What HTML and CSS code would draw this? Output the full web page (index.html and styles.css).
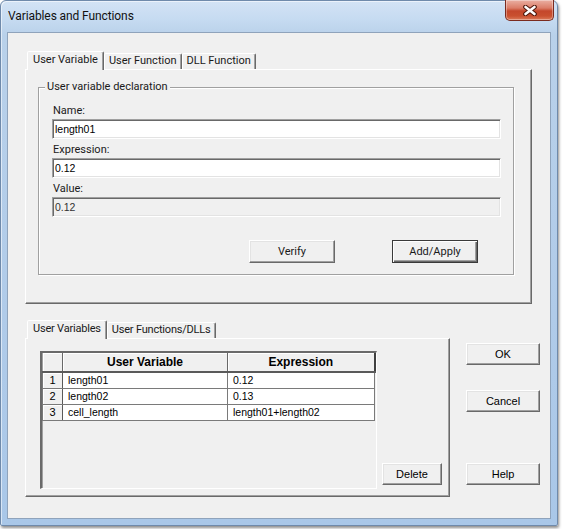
FILE: index.html
```html
<!DOCTYPE html>
<html>
<head>
<meta charset="utf-8">
<title>Variables and Functions</title>
<link rel="stylesheet" href="styles.css">
</head>
<body>
<div class="window">
  <div class="titlebar">
    <span class="title">Variables and Functions</span>
    <div class="close">
      <svg width="14" height="11" viewBox="0 0 14 11">
        <path d="M2.5 2 L11.5 9 M11.5 2 L2.5 9" stroke="#4a1408" stroke-width="4.6" stroke-linecap="round"/>
        <path d="M2.5 2 L11.5 9 M11.5 2 L2.5 9" stroke="#ffffff" stroke-width="2.6" stroke-linecap="round"/>
      </svg>
    </div>
  </div>
  <div class="client">
    <div class="tabctl">
      <div class="tabstrip">
        <div class="tab active">User Variable</div>
        <div class="tab">User Function</div>
        <div class="tab">DLL Function</div>
      </div>
      <div class="tabpage page1">
        <fieldset class="group">
          <legend>User variable declaration</legend>
          <div class="label">Name:</div>
          <div class="field">length01</div>
          <div class="label sp">Expression:</div>
          <div class="field">0.12</div>
          <div class="label sp">Value:</div>
          <div class="field disabled">0.12</div>
          <div class="group-buttons">
            <div class="btn">Verify</div>
            <div class="btn default">Add/Apply</div>
          </div>
        </fieldset>
      </div>
    </div>
    <div class="lower">
      <div class="tabctl tabctl2">
        <div class="tabstrip">
          <div class="tab active">User Variables</div>
          <div class="tab">User Functions/DLLs</div>
        </div>
        <div class="tabpage page2">
          <div class="grid">
            <table>
              <colgroup><col class="c0"><col class="c1"><col class="c2"></colgroup>
              <thead>
                <tr><th class="corner"></th><th>User Variable</th><th class="last">Expression</th></tr>
              </thead>
              <tbody>
                <tr><td class="num">1</td><td>length01</td><td>0.12</td></tr>
                <tr><td class="num">2</td><td>length02</td><td>0.13</td></tr>
                <tr><td class="num">3</td><td>cell_length</td><td>length01+length02</td></tr>
              </tbody>
            </table>
          </div>
          <div class="btn sbtn delete">Delete</div>
        </div>
      </div>
      <div class="side">
        <div class="btn sbtn ok">OK</div>
        <div class="btn sbtn cancel">Cancel</div>
        <div class="btn sbtn help">Help</div>
      </div>
    </div>
  </div>
</div>
</body>
</html>
```
FILE: styles.css
```css
* { box-sizing: border-box; }
html, body { margin: 0; padding: 0; background: #ffffff; }
body {
  width: 563px; height: 529px; overflow: hidden;
  font-family: Roboto, "Liberation Sans", sans-serif;
  font-size: 11px; color: #1a1a1a;
}

.window {
  position: relative;
  width: 558px; height: 526px;
  border: 1px solid #6f8aab;
  border-radius: 6px 6px 2px 2px;
  background: linear-gradient(180deg, #d3e3f5 0px, #c6dbf1 18px, #b9d1ea 34px, #b0cbe9 60%, #a9c7e8 100%);
  box-shadow: 1px 2px 3px rgba(0,0,0,.45), inset 1px 1px 0 rgba(255,255,255,.55);
  display: flex; flex-direction: column;
}
.titlebar {
  height: 31px; flex: none;
  display: flex; align-items: center;
  padding: 0 0 1px 7px;
}
.title { font-size: 12px; color: #111; letter-spacing: -0.1px; }
.close {
  position: absolute; top: -1px; right: 3px;
  width: 49px; height: 21px;
  border: 1px solid #7a2b1f; border-top: none;
  border-radius: 0 0 5px 5px;
  background: linear-gradient(180deg, #eab0a3 0%, #db7d68 40%, #c4472b 55%, #c9502f 80%, #db7b5a 100%);
  box-shadow: inset 0 0 0 1px rgba(255,255,255,.35);
  display: flex; align-items: center; justify-content: center;
}

.client {
  flex: 1;
  margin: 0 6px 6px 6px;
  background: #f0f0f0;
  border: 1px solid #8fa3bb;
  padding: 18px 0 0 17px;
}

.tabstrip {
  display: flex; align-items: flex-end;
  height: 18px; margin-left: 2px;
}
.tab {
  height: 16px;
  padding: 0 4px;
  line-height: 14px;
  background: #f0f0f0;
  border: 1px solid; border-bottom: none;
  border-color: #ffffff #696969 transparent #ffffff;
  border-radius: 2px 2px 0 0;
  box-shadow: inset -1px 0 0 #a0a0a0;
  white-space: nowrap;
}
.tab.active {
  position: relative; z-index: 1;
  height: 19px; margin-bottom: -1px;
  padding: 1px 5px 0 5px;
}
.tabctl2 .tab { letter-spacing: -0.2px; }

.tabpage {
  border: 1px solid;
  border-color: #ffffff #696969 #696969 #ffffff;
  box-shadow: inset -1px -1px 0 #a0a0a0;
  background: #f0f0f0;
}
.page1 {
  width: 507px; height: 235px;
  padding: 10px 0 0 12px;
}

.group {
  margin: 0; width: 476px;
  padding: 10px 0 11px 13px;
  border: 1px solid #a0a0a0;
  box-shadow: 1px 1px 0 #ffffff, inset 1px 1px 0 #ffffff;
}
.group legend {
  margin-left: -7px;
  padding: 0 2px;
  line-height: 14px;
  background: #f0f0f0;
}
.label { line-height: 14px; padding-left: 1px; }
.label.sp { margin-top: 4px; }
.field {
  margin-top: 1px;
  width: 449px; height: 20px;
  border: 1px solid;
  border-color: #a0a0a0 #ffffff #ffffff #a0a0a0;
  box-shadow: inset 1px 1px 0 #696969, inset -1px -1px 0 #e3e3e3;
  background: #ffffff;
  padding-left: 2px;
  font-family: "Liberation Sans", Arial, sans-serif;
  font-size: 10.5px; line-height: 18px; color: #000;
}
.field.disabled { background: #f0f0f0; color: #333; }

.group-buttons {
  display: flex; gap: 57px;
  margin: 23px 0 0 197px;
}
.btn {
  width: 86px; height: 23px;
  display: flex; align-items: center; justify-content: center;
  background: #f0f0f0;
  border: 1px solid;
  border-color: #ffffff #696969 #696969 #ffffff;
  box-shadow: inset -1px -1px 0 #a0a0a0, inset 1px 1px 0 #e3e3e3;
}
.btn.default {
  border: 1px solid #3a3a3a;
  box-shadow: inset 1px 1px 0 #ffffff, inset -1px -1px 0 #696969, inset -2px -2px 0 #a0a0a0;
}

.lower {
  display: flex; gap: 16px;
  margin-top: 16px;
}
.tabctl2 { width: 425px; }
.page2 {
  height: 159px;
  padding: 12px 0 0 14px;
  display: flex; align-items: flex-start;
}
.grid {
  width: 337px; height: 138px;
  border-style: solid;
  border-width: 2px 1px 1px 2px;
  border-color: #6a6a6a #ffffff #ffffff #6a6a6a;
  box-shadow: inset 1px 1px 0 #a0a0a0;
  background: #f0f0f0;
}
.grid table {
  border-collapse: collapse;
  table-layout: fixed;
  width: 332px;
  font-family: "Liberation Sans", Arial, sans-serif;
  color: #000;
}
.c0 { width: 20px; }
.c1 { width: 165px; }
.c2 { width: 147px; }
.grid th {
  height: 19px; padding: 0;
  font-size: 12px; font-weight: bold;
  text-align: center;
  background: #f0f0f0;
  border-right: 1px solid #696969;
  border-bottom: 2px solid #5a5a5a;
  box-shadow: inset 1px 1px 0 #ffffff;
}
.grid th.last { border-right: 2px solid #404040; }
.grid td {
  height: 16px; padding: 0 0 0 5px;
  font-size: 10.5px;
  background: #ffffff;
  border: 1px solid #7a7a7a;
  border-top: none;
  white-space: nowrap;
}
.grid td.num {
  padding: 0; text-align: center;
  font-size: 11px;
  background: #f0f0f0;
  border-right: 1px solid #5a5a5a;
  box-shadow: inset 1px 1px 0 #ffffff;
}

.sbtn {
  font-family: "Liberation Sans", Arial, sans-serif;
  font-size: 11px; color: #000;
  width: 74px; height: 22px;
}
.delete { width: 60px; margin: 112px 0 0 5px; }
.side { display: flex; flex-direction: column; width: 74px; }
.ok { margin-top: 23px; }
.cancel { margin-top: 25px; }
.help { margin-top: 51px; }
```
